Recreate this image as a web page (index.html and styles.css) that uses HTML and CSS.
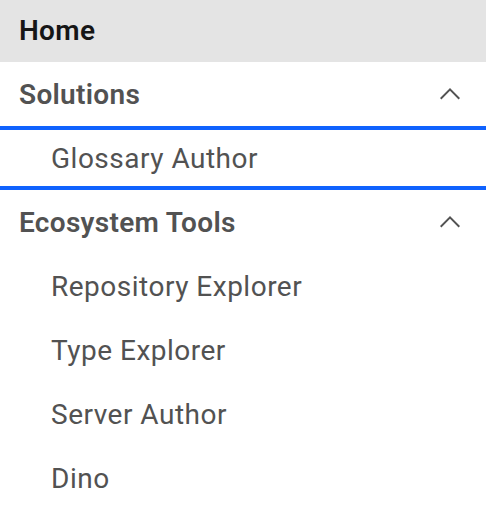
FILE: index.html
```html
<!DOCTYPE html>
<html>
<head>
<meta charset="utf-8">
<link rel="stylesheet" href="styles.css">
</head>
<body>
<nav class="sidenav">
  <a class="item home">Home</a>
  <div class="menu">
    <div class="item heading"><span>Solutions</span>
      <svg class="chev" viewBox="0 0 16 16" width="32" height="32"><path d="M8 5L13 10 12.3 10.7 8 6.4 3.7 10.7 3 10z"/></svg>
    </div>
    <a class="item sub selected">Glossary Author</a>
  </div>
  <div class="menu">
    <div class="item heading"><span>Ecosystem Tools</span>
      <svg class="chev" viewBox="0 0 16 16" width="32" height="32"><path d="M8 5L13 10 12.3 10.7 8 6.4 3.7 10.7 3 10z"/></svg>
    </div>
    <a class="item sub">Repository Explorer</a>
    <a class="item sub">Type Explorer</a>
    <a class="item sub">Server Author</a>
    <a class="item sub">Dino</a>
  </div>
</nav>
</body>
</html>
```

FILE: styles.css
```css
html, body {
  margin: 0;
  padding: 0;
  background: #ffffff;
}
body {
  font-family: Roboto, "Noto Sans", sans-serif;
  font-size: 28px;
  letter-spacing: 0.3px;
}
.sidenav {
  display: flex;
  flex-direction: column;
  width: 486px;
}
.menu {
  display: flex;
  flex-direction: column;
}
.item {
  display: flex;
  align-items: center;
  height: 64px;
  box-sizing: border-box;
  color: #525252;
  text-decoration: none;
}
.home {
  height: 62px;
  padding: 0 0 2px 19px;
  background: #e4e4e4;
  color: #161616;
  font-weight: 600;
}
.heading {
  justify-content: space-between;
  padding: 0 20px 0 19px;
  font-weight: 600;
}
.chev {
  fill: #525252;
}
.sub {
  padding-left: 51px;
  font-weight: 400;
  letter-spacing: 0.5px;
}
.selected {
  border-top: 4px solid #0f62fe;
  border-bottom: 4px solid #0f62fe;
}
```
